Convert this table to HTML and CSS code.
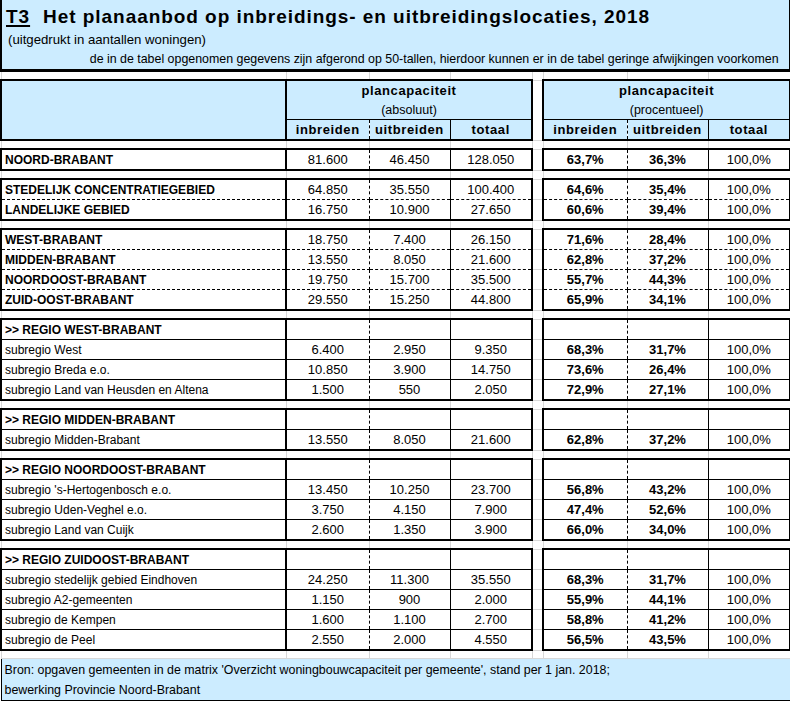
FILE: index.html
```html
<!DOCTYPE html>
<html lang="nl">
<head>
<meta charset="utf-8">
<title>T3 Planaanbod</title>
<link rel="stylesheet" href="styles.css">
</head>
<body>
<table class="sheet">
  <colgroup>
    <col class="c-lab"><col class="c-n1"><col class="c-n2"><col class="c-n3"><col class="c-gap"><col class="c-p1"><col class="c-p2"><col class="c-p3">
  </colgroup>
  <tbody>
    <tr class="title-row">
      <td colspan="8" class="title-cell">
        <div class="title"><span class="t3">T3</span><span class="title-text">Het planaanbod op inbreidings- en uitbreidingslocaties, 2018</span></div>
        <div class="subtitle">(uitgedrukt in aantallen woningen)</div>
        <div class="note">de in de tabel opgenomen gegevens zijn afgerond op 50-tallen, hierdoor kunnen er in de tabel geringe afwijkingen voorkomen</div>
      </td>
    </tr>
    <tr class="sp sp-first"><td></td><td></td><td></td><td></td><td></td><td></td><td></td><td></td></tr>

    <tr class="hd hd1">
      <td class="lab hlab" rowspan="3"></td>
      <td class="grp" colspan="3">plancapaciteit</td>
      <td class="gap" rowspan="3"></td>
      <td class="grp pgrp" colspan="3">plancapaciteit</td>
    </tr>
    <tr class="hd hd2">
      <td class="grp sub" colspan="3">(absoluut)</td>
      <td class="grp pgrp sub" colspan="3">(procentueel)</td>
    </tr>
    <tr class="hd hd3">
      <td class="n1 hc">inbreiden</td><td class="n2 hc">uitbreiden</td><td class="n3 hc">totaal</td>
      <td class="p1 hc">inbreiden</td><td class="p2 hc">uitbreiden</td><td class="p3 hc">totaal</td>
    </tr>
    <tr class="sp"><td></td><td></td><td></td><td></td><td></td><td></td><td></td><td></td></tr>

    <tr class="row top bot"><td class="lab b">NOORD-BRABANT</td><td class="n1">81.600</td><td class="n2">46.450</td><td class="n3">128.050</td><td class="gap"></td><td class="p1 b">63,7%</td><td class="p2 b">36,3%</td><td class="p3">100,0%</td></tr>
    <tr class="sp"><td></td><td></td><td></td><td></td><td></td><td></td><td></td><td></td></tr>

    <tr class="row top dash"><td class="lab b">STEDELIJK CONCENTRATIEGEBIED</td><td class="n1">64.850</td><td class="n2">35.550</td><td class="n3">100.400</td><td class="gap"></td><td class="p1 b">64,6%</td><td class="p2 b">35,4%</td><td class="p3">100,0%</td></tr>
    <tr class="row bot"><td class="lab b">LANDELIJKE GEBIED</td><td class="n1">16.750</td><td class="n2">10.900</td><td class="n3">27.650</td><td class="gap"></td><td class="p1 b">60,6%</td><td class="p2 b">39,4%</td><td class="p3">100,0%</td></tr>
    <tr class="sp"><td></td><td></td><td></td><td></td><td></td><td></td><td></td><td></td></tr>

    <tr class="row top dash"><td class="lab b">WEST-BRABANT</td><td class="n1">18.750</td><td class="n2">7.400</td><td class="n3">26.150</td><td class="gap"></td><td class="p1 b">71,6%</td><td class="p2 b">28,4%</td><td class="p3">100,0%</td></tr>
    <tr class="row dash"><td class="lab b">MIDDEN-BRABANT</td><td class="n1">13.550</td><td class="n2">8.050</td><td class="n3">21.600</td><td class="gap"></td><td class="p1 b">62,8%</td><td class="p2 b">37,2%</td><td class="p3">100,0%</td></tr>
    <tr class="row dash"><td class="lab b">NOORDOOST-BRABANT</td><td class="n1">19.750</td><td class="n2">15.700</td><td class="n3">35.500</td><td class="gap"></td><td class="p1 b">55,7%</td><td class="p2 b">44,3%</td><td class="p3">100,0%</td></tr>
    <tr class="row bot"><td class="lab b">ZUID-OOST-BRABANT</td><td class="n1">29.550</td><td class="n2">15.250</td><td class="n3">44.800</td><td class="gap"></td><td class="p1 b">65,9%</td><td class="p2 b">34,1%</td><td class="p3">100,0%</td></tr>
    <tr class="sp"><td></td><td></td><td></td><td></td><td></td><td></td><td></td><td></td></tr>

    <tr class="row top line"><td class="lab b">&gt;&gt; REGIO WEST-BRABANT</td><td class="n1"></td><td class="n2"></td><td class="n3"></td><td class="gap"></td><td class="p1"></td><td class="p2"></td><td class="p3"></td></tr>
    <tr class="row line"><td class="lab">subregio West</td><td class="n1">6.400</td><td class="n2">2.950</td><td class="n3">9.350</td><td class="gap"></td><td class="p1 b">68,3%</td><td class="p2 b">31,7%</td><td class="p3">100,0%</td></tr>
    <tr class="row line"><td class="lab">subregio Breda e.o.</td><td class="n1">10.850</td><td class="n2">3.900</td><td class="n3">14.750</td><td class="gap"></td><td class="p1 b">73,6%</td><td class="p2 b">26,4%</td><td class="p3">100,0%</td></tr>
    <tr class="row bot"><td class="lab">subregio Land van Heusden en Altena</td><td class="n1">1.500</td><td class="n2">550</td><td class="n3">2.050</td><td class="gap"></td><td class="p1 b">72,9%</td><td class="p2 b">27,1%</td><td class="p3">100,0%</td></tr>
    <tr class="sp"><td></td><td></td><td></td><td></td><td></td><td></td><td></td><td></td></tr>

    <tr class="row top line"><td class="lab b">&gt;&gt; REGIO MIDDEN-BRABANT</td><td class="n1"></td><td class="n2"></td><td class="n3"></td><td class="gap"></td><td class="p1"></td><td class="p2"></td><td class="p3"></td></tr>
    <tr class="row bot"><td class="lab">subregio Midden-Brabant</td><td class="n1">13.550</td><td class="n2">8.050</td><td class="n3">21.600</td><td class="gap"></td><td class="p1 b">62,8%</td><td class="p2 b">37,2%</td><td class="p3">100,0%</td></tr>
    <tr class="sp"><td></td><td></td><td></td><td></td><td></td><td></td><td></td><td></td></tr>

    <tr class="row top line"><td class="lab b">&gt;&gt; REGIO NOORDOOST-BRABANT</td><td class="n1"></td><td class="n2"></td><td class="n3"></td><td class="gap"></td><td class="p1"></td><td class="p2"></td><td class="p3"></td></tr>
    <tr class="row line"><td class="lab">subregio 's-Hertogenbosch e.o.</td><td class="n1">13.450</td><td class="n2">10.250</td><td class="n3">23.700</td><td class="gap"></td><td class="p1 b">56,8%</td><td class="p2 b">43,2%</td><td class="p3">100,0%</td></tr>
    <tr class="row line"><td class="lab">subregio Uden-Veghel e.o.</td><td class="n1">3.750</td><td class="n2">4.150</td><td class="n3">7.900</td><td class="gap"></td><td class="p1 b">47,4%</td><td class="p2 b">52,6%</td><td class="p3">100,0%</td></tr>
    <tr class="row bot"><td class="lab">subregio Land van Cuijk</td><td class="n1">2.600</td><td class="n2">1.350</td><td class="n3">3.900</td><td class="gap"></td><td class="p1 b">66,0%</td><td class="p2 b">34,0%</td><td class="p3">100,0%</td></tr>
    <tr class="sp"><td></td><td></td><td></td><td></td><td></td><td></td><td></td><td></td></tr>

    <tr class="row top line"><td class="lab b">&gt;&gt; REGIO ZUIDOOST-BRABANT</td><td class="n1"></td><td class="n2"></td><td class="n3"></td><td class="gap"></td><td class="p1"></td><td class="p2"></td><td class="p3"></td></tr>
    <tr class="row line"><td class="lab">subregio stedelijk gebied Eindhoven</td><td class="n1">24.250</td><td class="n2">11.300</td><td class="n3">35.550</td><td class="gap"></td><td class="p1 b">68,3%</td><td class="p2 b">31,7%</td><td class="p3">100,0%</td></tr>
    <tr class="row line"><td class="lab">subregio A2-gemeenten</td><td class="n1">1.150</td><td class="n2">900</td><td class="n3">2.000</td><td class="gap"></td><td class="p1 b">55,9%</td><td class="p2 b">44,1%</td><td class="p3">100,0%</td></tr>
    <tr class="row line"><td class="lab">subregio de Kempen</td><td class="n1">1.600</td><td class="n2">1.100</td><td class="n3">2.700</td><td class="gap"></td><td class="p1 b">58,8%</td><td class="p2 b">41,2%</td><td class="p3">100,0%</td></tr>
    <tr class="row bot"><td class="lab">subregio de Peel</td><td class="n1">2.550</td><td class="n2">2.000</td><td class="n3">4.550</td><td class="gap"></td><td class="p1 b">56,5%</td><td class="p2 b">43,5%</td><td class="p3">100,0%</td></tr>
    <tr class="sp"><td></td><td></td><td></td><td></td><td></td><td></td><td></td><td></td></tr>

    <tr class="foot-row">
      <td colspan="8" class="foot-cell">
        <div class="foot-line">Bron: opgaven gemeenten in de matrix 'Overzicht woningbouwcapaciteit per gemeente', stand per 1 jan. 2018;</div>
        <div class="foot-line">bewerking Provincie Noord-Brabant</div>
      </td>
    </tr>
  </tbody>
</table>
</body>
</html>
```

FILE: styles.css
```css
html, body {
  margin: 0;
  padding: 0;
  background: #ffffff;
}

body {
  font-family: "Liberation Sans", Arial, sans-serif;
  color: #000;
}

.sheet {
  border-collapse: collapse;
  table-layout: fixed;
  width: 789px;
}

.c-lab { width: 285px; }
.c-n1 { width: 83px; }
.c-n2 { width: 81px; }
.c-n3 { width: 82px; }
.c-gap { width: 11px; }
.c-p1 { width: 84px; }
.c-p2 { width: 81px; }
.c-p3 { width: 82px; }

td {
  padding: 0;
  font-size: 13px;
  text-align: center;
  white-space: nowrap;
  overflow: hidden;
  vertical-align: middle;
}

/* title band */
.title-row td { height: 69px; }
.title-cell {
  background: #ccecff;
  border-left: 2px solid #000;
  border-right: 3px solid #000;
  border-bottom: 3px solid #000;
  text-align: left;
  vertical-align: top;
}
.title {
  display: flex;
  align-items: baseline;
  height: 30px;
  padding-left: 4px;
  font-weight: bold;
  font-size: 19px;
  letter-spacing: 0.95px;
  line-height: 34px;
}
.t3 {
  text-decoration: underline;
  text-decoration-thickness: 2px;
  text-underline-offset: 2px;
  margin-right: 13px;
}
.subtitle {
  padding-left: 6px;
  font-size: 13.2px;
  line-height: 20px;
}
.note {
  padding-right: 10px;
  text-align: right;
  font-size: 12.4px;
  line-height: 18px;
}

/* spacer rows with spreadsheet grid lines */
.sp td {
  height: 7px;
  border: 1px solid #d8d8d8;
}
.sp-first td { height: 7px; }

.gap {
  border: 1px solid #d8d8d8;
}

/* header */
.hd td { height: 19px; }
.hlab {
  background: #ccecff;
  border-top: 2px solid #000;
  border-bottom: 2px solid #000;
}
.grp {
  background: #ccecff;
  border-left: 2px solid #000;
  border-right: 2px solid #000;
  font-weight: bold;
  letter-spacing: 0.6px;
}
.hd1 .grp { border-top: 2px solid #000; }
.hd2 .grp {
  border-bottom: 1px solid #000;
  font-weight: normal;
  letter-spacing: 0;
  font-size: 12.5px;
}
.hd3 td.hc {
  background: #ccecff;
  border-bottom: 2px solid #000;
  font-weight: bold;
  letter-spacing: 0.6px;
}

/* body cells */
.row td { height: 19px; }

.lab {
  border-left: 2px solid #000;
  border-right: 2px solid #000;
  text-align: left;
  padding-left: 3px;
  font-size: 12px;
}
.n1, .p1 { border-right: 1px dashed #000; }
.n2, .p2 { border-right: 1px solid #000; }
.n3, .p3 { border-right: 2px solid #000; }
.p1 { border-left: 2px solid #000; }

.b { font-weight: bold; }

tr.top > td:not(.gap) { border-top: 2px solid #000; }
tr.bot > td:not(.gap) { border-bottom: 2px solid #000; }
tr.dash > td:not(.gap) { border-bottom: 1px dashed #000; }
tr.line > td:not(.gap) { border-bottom: 1px solid #000; }

/* footer */
.foot-cell {
  background: #ccecff;
  border: 1px solid #000;
  text-align: left;
  vertical-align: top;
  padding-left: 3px;
  padding-top: 1px;
  font-size: 12.4px;
}
.foot-line {
  height: 20px;
  line-height: 20px;
}
```
